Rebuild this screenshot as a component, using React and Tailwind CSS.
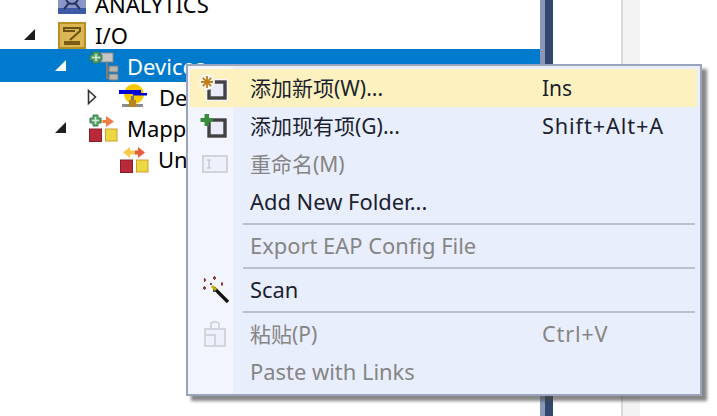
const FONT = "font-['Noto_Sans','Noto_Sans_CJK_SC',sans-serif]";

function Tri({ open, white }) {
  if (open)
    return (
      <svg width="12" height="12" viewBox="0 0 12 12">
        <polygon points="11,0 11,11 0,11" fill={white ? "#ffffff" : "#1e1e1e"} />
      </svg>
    );
  return (
    <svg width="10" height="16" viewBox="0 0 10 16">
      <polygon points="1.5,1.5 8.5,8 1.5,14.5" fill="#fff" stroke="#333" strokeWidth="1.6" />
    </svg>
  );
}

function Analytics() {
  return (
    <svg width="28" height="19" viewBox="0 0 28 19" className="block">
      <rect x="0" y="0" width="28" height="15" fill="#8a96c8" />
      <rect x="0" y="13" width="28" height="6" fill="#3f5aa5" />
      <circle cx="14" cy="3" r="6" fill="none" stroke="#2a3560" strokeWidth="2" />
      <path d="M6 14 L11 8 M22 14 L17 8" stroke="#2a3560" strokeWidth="2" />
    </svg>
  );
}

function IO() {
  return (
    <svg width="28" height="27" viewBox="0 0 28 27" className="block">
      <rect x="0" y="0" width="28" height="27" fill="#b98f22" />
      <rect x="2" y="2" width="24" height="23" fill="#dcb654" />
      <path d="M5 6 H22 V9 L12 18 M6 6 V9 H17" stroke="#6b5212" strokeWidth="2" fill="none" />
      <rect x="6" y="19" width="16" height="4" fill="#7a5c14" />
    </svg>
  );
}

function Devices() {
  return (
    <svg width="30" height="30" viewBox="0 0 30 30" className="block">
      <path d="M18 12 V27 H22 M18 19 H22" stroke="#7d7d7d" strokeWidth="2" fill="none" />
      <rect x="12" y="2" width="12" height="9" fill="#c6c6c6" stroke="#8a8a8a" />
      <rect x="20" y="15" width="9" height="6" fill="#b5b5b5" stroke="#7d7d7d" />
      <rect x="20" y="23" width="9" height="6" fill="#b5b5b5" stroke="#7d7d7d" />
      <path d="M4 1 H10 V4 H13 V9 H10 V12 H4 V9 H1 V4 H4 Z" fill="#5aa36a" stroke="#3d7d4e" />
      <path d="M7 3 V10 M3 6.5 H11" stroke="#cfe8d4" strokeWidth="1.6" />
    </svg>
  );
}

function Device() {
  return (
    <svg width="30" height="28" viewBox="0 0 30 28" className="block">
      <circle cx="15" cy="11" r="10" fill="#f7c900" />
      <rect x="0" y="7" width="22" height="4" fill="#0000d8" />
      <rect x="14" y="10" width="14" height="2.5" fill="#0000d8" />
      <rect x="3" y="21" width="21" height="3" fill="#8c8c8c" />
      <rect x="10" y="17" width="7" height="7" fill="#b8821c" />
      <rect x="12" y="13" width="3" height="4" fill="#777" />
    </svg>
  );
}

function Mapping({ plus }) {
  return (
    <svg width="29" height="28" viewBox="0 0 29 28" className="block">
      <rect x="0.5" y="15" width="12" height="12.5" fill="#b8293a" stroke="#8a1c2a" />
      <rect x="16.5" y="15" width="11.5" height="12" fill="#ecd840" stroke="#d59a30" />
      {plus ? (
        <>
          <path d="M10 6 H17 V2 L25 7.5 L17 13 V9 H10 Z" fill="#f2794a" />
          <path d="M10 6 H14 V9 H10 Z" fill="#f6c94e" />
          <path d="M4 1 H9 V4 H12 V9 H9 V12 H4 V9 H1 V4 H4 Z" fill="#5aa36a" stroke="#3d7d4e" />
          <path d="M6.5 3 V10 M3 6.5 H10" stroke="#cfe8d4" strokeWidth="1.6" />
        </>
      ) : (
        <>
          <path d="M3 7.5 L10 2 V5.5 H16 V9.5 H10 V13 Z" fill="#f6c94e" />
          <path d="M15 5.5 H18 V2 L25 7.5 L18 13 V9.5 H15 Z" fill="#ea5b3e" />
        </>
      )}
    </svg>
  );
}

function Square({ children }) {
  return (
    <svg width="32" height="32" viewBox="0 0 32 32" className="block">
      <rect x="10" y="10" width="16" height="16" fill="#e9ecf8" stroke="#f5f6fb" strokeWidth="6" />
      <rect x="10" y="10" width="16" height="16" fill="#e9ecf8" stroke="#424242" strokeWidth="3.4" />
      {children}
    </svg>
  );
}

function IconNew() {
  return (
    <Square>
      <circle cx="8" cy="10" r="8" fill="#f6f5ee" />
      <path d="M8 4 V16 M2 10 H14 M3.8 5.8 L12.2 14.2 M12.2 5.8 L3.8 14.2" stroke="#c27c1e" strokeWidth="1.8" />
    </Square>
  );
}

function IconAdd() {
  return (
    <Square>
      <path d="M5.5 4 H10 V8 H14 V12 H10 V16 H5.5 V12 H1.5 V8 H5.5 Z" fill="#388a3c" />
    </Square>
  );
}

function IconRename() {
  return (
    <svg width="26" height="18" viewBox="0 0 26 18" className="block">
      <rect x="1" y="1" width="24" height="16" fill="#eef1fb" stroke="#c8ccd4" strokeWidth="1.6" />
      <path d="M5 5 H9 M5 13 H9 M7 5 V13" stroke="#c0c4cc" strokeWidth="1.2" />
    </svg>
  );
}

function IconWand() {
  return (
    <svg width="30" height="28" viewBox="0 0 30 28" className="block">
      <path d="M14 12 L28 26" stroke="#111" strokeWidth="3.2" />
      <path d="M12 10 L16 14" stroke="#c8b400" strokeWidth="3" />
      <path d="M4 4 H6 M13 2 H16 M21 8 H23 M3 12 H6 M10 8 H12 M13 15 H15" stroke="#555" strokeWidth="2" />
      <path d="M4.5 2 V6 M14.5 0 V4 M22 6 V10 M4.5 10 V14" stroke="#a33" strokeWidth="1.2" />
    </svg>
  );
}

function IconPaste() {
  return (
    <svg width="24" height="26" viewBox="0 0 24 26" className="block">
      <path d="M2 8 H22 V25 H2 Z" fill="#eef1fb" stroke="#c8ccd4" strokeWidth="1.5" />
      <path d="M8 8 V3 Q8 1 12 1 Q16 1 16 3 V8" fill="none" stroke="#c8ccd4" strokeWidth="1.5" />
      <path d="M2 14 H12 V25" fill="none" stroke="#c8ccd4" strokeWidth="1.5" />
    </svg>
  );
}

function Item({ icon, label, keys, disabled, highlight, latin, keyClass = "" }) {
  return (
    <div
      className={`flex h-[38px] items-center ${highlight ? "bg-[#fdf2bf]" : ""} ${
        disabled ? "text-[#858585]" : "text-[#1b1f2f]"
      }`}
    >
      <div className="flex w-[49px] shrink-0 justify-center">{icon}</div>
      <div className={`ml-[11px] w-[292px] whitespace-nowrap ${latin ? "text-[21.9px]" : ""}`}>{label}</div>
      <div className={`whitespace-nowrap ${keyClass}`}>{keys}</div>
    </div>
  );
}

function Sep() {
  return <div className="my-[2px] ml-[53px] mr-[2px] h-[2px] bg-[#bcc0cf]" />;
}

export default function App() {
  return (
    <div className={`relative flex h-[416px] w-[717px] overflow-hidden bg-white text-[21px] ${FONT}`}>
      <div className="w-[540px] shrink-0 leading-none">
        <div className="-mt-[12px] flex flex-col text-[22px]">
          <div className="flex h-[32px] items-center text-black">
            <div className="ml-[58px] flex w-[28px] overflow-hidden">
              <Analytics />
            </div>
            <span className="ml-[9px] whitespace-nowrap">ANALYTICS</span>
          </div>
          <div className="flex h-[29px] items-center text-black">
            <div className="ml-[24px] flex w-[12px]"><Tri open /></div>
            <div className="ml-[22px] w-[28px] pt-[2px]"><IO /></div>
            <span className="ml-[9px]">I/O</span>
          </div>
          <div className="flex h-[33px] items-center bg-[#007acc] text-white">
            <div className="ml-[55px] flex w-[12px]"><Tri open white /></div>
            <div className="ml-[22px] w-[30px]"><Devices /></div>
            <span className="ml-[8px]">Devices</span>
          </div>
          <div className="flex h-[30px] items-center text-black">
            <div className="ml-[87px] flex w-[10px]"><Tri /></div>
            <div className="ml-[22px] w-[30px]"><Device /></div>
            <span className="ml-[10px]">Device 1</span>
          </div>
          <div className="flex h-[31px] items-center text-black">
            <div className="ml-[55px] flex w-[12px]"><Tri open /></div>
            <div className="ml-[22px] w-[29px]"><Mapping plus /></div>
            <span className="ml-[9px]">Mappings</span>
          </div>
          <div className="flex h-[32px] items-center text-black">
            <div className="ml-[120px] w-[29px]"><Mapping /></div>
            <span className="ml-[9px]">Unnamed</span>
          </div>
        </div>
      </div>

      <div className="w-[5px] shrink-0 bg-[#8a98b8]" />
      <div className="w-[8px] shrink-0 bg-[#32476b]" />
      <div className="w-[68px] shrink-0 bg-white" />
      <div className="w-[2px] shrink-0 bg-[#d8d8d8]" />
      <div className="w-[17px] shrink-0 bg-[#f3f3f3]" />

      <div className="absolute left-[186px] top-[64px] w-[516px] border-[2px] border-[#9aa5bb] bg-[#e9eefc] py-[3px] pl-[2px] pr-[3px] leading-none shadow-[5px_5px_3px_rgba(70,70,70,0.65)]">
        <div className="pointer-events-none absolute bottom-0 left-0 top-0 w-[45px] bg-[#f2f5fe]" />
        <div className="relative">
          <Item highlight icon={<IconNew />} label="添加新项(W)..." keys="Ins" />
          <Item icon={<IconAdd />} label="添加现有项(G)..." keys="Shift+Alt+A" keyClass="tracking-[0.9px] text-[21.7px]" />
          <Item disabled icon={<IconRename />} label="重命名(M)" />
          <Item latin icon={null} label="Add New Folder..." />
          <Sep />
          <Item latin disabled icon={null} label="Export EAP Config File" />
          <Sep />
          <Item latin icon={<IconWand />} label="Scan" />
          <Sep />
          <Item disabled icon={<IconPaste />} label="粘贴(P)" keys="Ctrl+V" keyClass="tracking-[0.8px] text-[21.7px]" />
          <Item latin disabled icon={null} label="Paste with Links" />
        </div>
      </div>
    </div>
  );
}
